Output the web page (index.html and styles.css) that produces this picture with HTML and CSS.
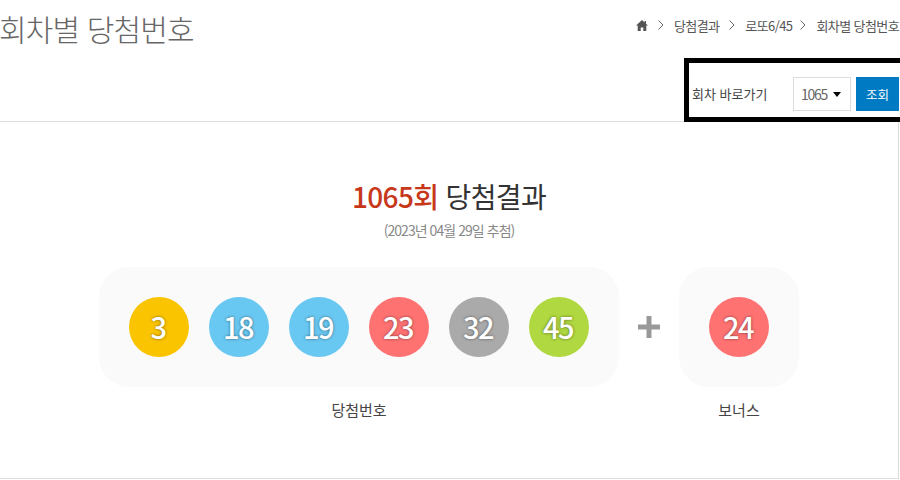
FILE: index.html
```html
<!DOCTYPE html>
<html lang="ko">
<head>
<meta charset="utf-8">
<title>회차별 당첨번호</title>
<link rel="stylesheet" href="styles.css">
</head>
<body>
<div class="page">
  <header class="top">
    <h2 class="title">회차별 당첨번호</h2>
    <nav class="crumbs">
      <svg class="home" viewBox="0 0 12 11" width="12" height="11"><path d="M6 0 0 5.500h1.700V11h3V7.400h2.600V11h3V5.500H12L10 3.700V1H8.600v1.400z" fill="#555"/></svg>
      <svg class="chev" viewBox="0 0 6 10" width="6" height="10"><path d="M.5.500 5 5 .5 9.500" fill="none" stroke="#666"/></svg>
      <span>당첨결과</span>
      <svg class="chev" viewBox="0 0 6 10" width="6" height="10"><path d="M.5.500 5 5 .5 9.500" fill="none" stroke="#666"/></svg>
      <span>로또6/45</span>
      <svg class="chev chev-last" viewBox="0 0 6 10" width="6" height="10"><path d="M.5.500 5 5 .5 9.500" fill="none" stroke="#666"/></svg>
      <span>회차별 당첨번호</span>
    </nav>
  </header>
  <form class="search">
    <span class="search-label">회차 바로가기</span>
    <div class="select"><span>1065</span><i class="caret"></i></div>
    <button class="go" type="button">조회</button>
  </form>
  <main class="result">
    <h3 class="heading"><strong>1065회</strong> 당첨결과</h3>
    <p class="date">(2023년 04월 29일 추첨)</p>
    <div class="draw">
      <div class="group">
        <div class="panel panel-main">
          <span class="ball yellow">3</span>
          <span class="ball blue">18</span>
          <span class="ball blue">19</span>
          <span class="ball red">23</span>
          <span class="ball gray">32</span>
          <span class="ball green">45</span>
        </div>
        <p class="caption">당첨번호</p>
      </div>
      <svg class="plus" viewBox="0 0 22 22" width="22" height="22"><path d="M8.500 0h5v8.500h8.500v5h-8.500v8.500h-5v-8.500h-8.500v-5h8.500z" fill="#999"/></svg>
      <div class="group">
        <div class="panel panel-bonus">
          <span class="ball red">24</span>
        </div>
        <p class="caption">보너스</p>
      </div>
    </div>
  </main>
</div>
</body>
</html>
```
FILE: styles.css
```css
* { box-sizing: border-box; }
html, body { margin: 0; padding: 0; background: #fff; overflow: hidden; }
body {
  width: 900px;
  height: 480px;
  font-family: "Noto Sans CJK KR", "Noto Sans", sans-serif;
  color: #333;
}
.page { width: 900px; display: flex; flex-direction: column; }
.top {
  height: 58px;
  display: flex;
  justify-content: space-between;
  align-items: flex-start;
  overflow: hidden;
}
.title {
  margin: 6px 0 0 -1px;
  font-size: 30px;
  line-height: 44px;
  font-weight: 300;
  letter-spacing: -0.85px;
  color: #666;
}
.crumbs {
  display: flex;
  align-items: center;
  gap: 10px;
  height: 20px;
  margin: 15px 1px 0 0;
  font-size: 13px;
  letter-spacing: -0.6px;
  color: #555;
}
.chev-last { margin-left: -2px; }
.search {
  align-self: flex-end;
  width: 216px;
  height: 64px;
  border: 5px solid #000;
  border-right: 0;
  padding: 14px 1px 0 3px;
  display: flex;
  align-items: flex-start;
  position: relative;
  z-index: 1;
}
.search-label {
  width: 101px;
  line-height: 34px;
  font-size: 13px;
  color: #444;
}
.select {
  width: 58px;
  height: 34px;
  border: 1px solid #ddd;
  display: flex;
  align-items: center;
  gap: 6px;
  padding-left: 7px;
  font-size: 14px;
  letter-spacing: -1.3px;
  color: #666;
}
.caret {
  width: 0;
  height: 0;
  border-left: 4px solid transparent;
  border-right: 4px solid transparent;
  border-top: 5px solid #000;
}
.go {
  margin-left: 5px;
  width: 43px;
  height: 34px;
  padding: 0;
  border: 0;
  background: #007bc3;
  color: #fff;
  font: inherit;
  font-size: 12.500px;
}
.result {
  width: 899px;
  height: 358px;
  margin-top: -1px;
  border-top: 1px solid #ddd;
  border-right: 1px solid #ddd;
  border-bottom: 1px solid #ddd;
  display: flex;
  flex-direction: column;
  align-items: center;
  padding-top: 52px;
}
.heading {
  margin: 0;
  font-size: 28px;
  line-height: 44px;
  font-weight: 400;
  letter-spacing: -0.65px;
  color: #333;
}
.heading strong { font-weight: 500; color: #c7381b; }
.date {
  margin: 0;
  font-size: 14px;
  line-height: 24px;
  letter-spacing: -0.95px;
  color: #888;
}
.draw {
  margin-top: 25px;
  display: flex;
  align-items: flex-start;
  gap: 20px;
}
.group { display: flex; flex-direction: column; align-items: center; }
.panel {
  height: 120px;
  border-radius: 30px;
  background: #fafafa;
  display: flex;
  align-items: center;
  justify-content: center;
  gap: 20px;
}
.panel-main { width: 520px; }
.panel-bonus { width: 120px; }
.plus { margin: 49px -1px 0; }
.ball {
  width: 60px;
  height: 60px;
  border-radius: 50%;
  display: flex;
  align-items: center;
  justify-content: center;
  padding: 0 2px 3px 0;
  font-family: "Noto Sans CJK KR", sans-serif;
  font-size: 29px;
  font-weight: 500;
  letter-spacing: -1.6px;
  color: #fff;
  text-shadow: 0 0 3px rgba(0, 0, 0, 0.5);
}
.yellow { background: #fbc400; }
.blue { background: #69c8f2; }
.red { background: #ff7272; }
.gray { background: #aaa; }
.green { background: #b0d840; }
.caption {
  margin: 11px 0 0;
  font-size: 15px;
  line-height: 24px;
  color: #444;
}
```
